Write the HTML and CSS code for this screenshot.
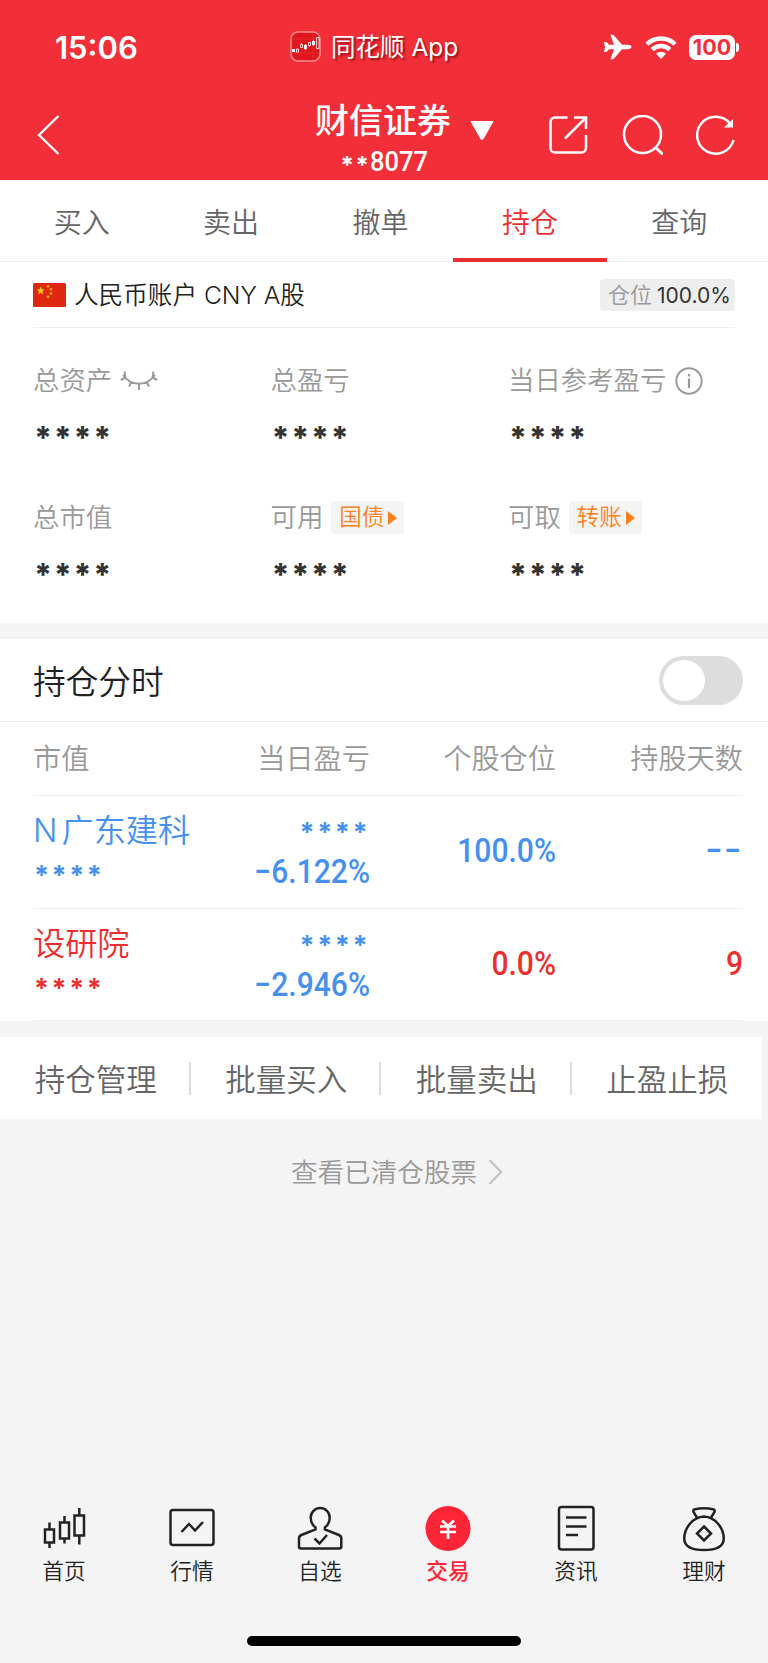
FILE: index.html
```html
<!DOCTYPE html>
<html lang="zh-CN">
<head>
  <meta charset="UTF-8">
  <meta name="viewport" content="width=device-width, initial-scale=1.0">
  <title>持仓</title>
  <link rel="stylesheet" href="styles.css">
</head>
<body>
  <header class="header">
    <div class="status-bar">
      <span class="time">15:06</span>
      <div class="app-name">
        <svg class="app-icon" width="32" height="32" viewBox="0 0 32 32">
          <rect x="1" y="1" width="29" height="29" rx="7" fill="#e0161f" stroke="#f98a8d" stroke-width="1.5"/>
          <path d="M2 8h27M2 22h27M23 2v27" stroke="#e93a40" stroke-width=".6"/>
          <path d="M2 18h3v3H2zM14 14h3v4h-3zM22 10h3v4h-3z" fill="#fff"/>
          <path d="M6.500 18h2v3h-2zM10.500 13.500h2v3h-2zM11.500 12v1M18.500 11.500h2v3h-2zM19.500 14v2M26.500 6.500h2.500v11h-2.500zM15.500 13v6M23.500 9v6" fill="none" stroke="#fff" stroke-width=".8"/>
        </svg>
        <span>同花顺 App</span>
      </div>
      <div class="status-icons">
        <svg class="plane" width="30" height="28" viewBox="0 0 30 28">
          <path d="M28.500 14c0 1.300-2 2.200-4 2.200h-5.500L11 25.500c-.5.600-1 .8-2 .8H7.500l3.500-10H6L3.500 19H1l1-5-1-5h2.500L6 11.800h5L7.500 1.700H9c1 0 1.500.2 2 .8l8 9.300h5.500c2 0 4 .9 4 2.200z" fill="#fff"/>
        </svg>
        <svg class="wifi" width="32" height="25" viewBox="0 0 32 25">
          <path d="M2 9.200a20 20 0 0 1 28 0M7.200 14.600a12.500 12.500 0 0 1 17.600 0" fill="none" stroke="#fff" stroke-width="4.400"/>
          <path d="M16 24l-5-5.200a7.300 7.300 0 0 1 10 0z" fill="#fff"/>
        </svg>
        <span class="battery">100</span>
        <span class="battery-tip"></span>
      </div>
    </div>
    <div class="title-bar">
      <svg class="back" width="24" height="42" viewBox="0 0 24 42">
        <path d="M22.500 2L3 21l19.500 19" fill="none" stroke="#fff" stroke-width="2.300"/>
      </svg>
      <div class="broker">
        <div class="broker-name">财信证券</div>
        <div class="broker-no"><i>*</i><i>*</i><span>8077</span></div>
      </div>
      <svg class="caret" width="26" height="21" viewBox="0 0 26 21">
        <path d="M2 1.500h22L14 19q-1 1.500-2 0z" fill="#fff" stroke="#fff" stroke-linejoin="round"/>
      </svg>
      <div class="actions">
        <svg width="40" height="40" viewBox="0 0 40 40">
          <path d="M19.500 2.500H7a4.500 4.500 0 0 0-4.500 4.500v26A4.500 4.500 0 0 0 7 37.500h26.500a4.500 4.500 0 0 0 4.500-4.500V20M26 2.500h12V14M37.500 3L17 23.500" fill="none" stroke="#fff" stroke-width="2.500"/>
        </svg>
        <svg width="42" height="40" viewBox="0 0 42 40">
          <circle cx="21.500" cy="19.500" r="18.500" fill="none" stroke="#fff" stroke-width="2.500"/>
          <path d="M34 32l8 7.500" stroke="#fff" stroke-width="3"/>
        </svg>
        <svg width="40" height="40" viewBox="0 0 40 40">
          <path d="M34 8.500A18.500 18.500 0 1 0 37.500 25" fill="none" stroke="#fff" stroke-width="2.500"/>
          <path d="M37 4v8.500H28z" fill="#fff"/>
        </svg>
      </div>
    </div>
  </header>

  <nav class="tabs">
    <span class="tab">买入</span>
    <span class="tab">卖出</span>
    <span class="tab">撤单</span>
    <span class="tab active">持仓</span>
    <span class="tab">查询</span>
  </nav>

  <section class="account">
    <div class="account-head">
      <svg class="flag" width="33" height="24" viewBox="0 0 33 24">
        <rect width="33" height="24" rx="1.500" fill="#de2910"/>
        <path d="M7.700 3.600l1 2.900h3l-2.400 1.800.9 2.900-2.500-1.800-2.500 1.800.9-2.900-2.400-1.800h3z" fill="#ffde00"/>
        <g fill="#f7a81b"><circle cx="15" cy="3.200" r="1.300"/><circle cx="18" cy="6.200" r="1.300"/><circle cx="18" cy="10.500" r="1.300"/><circle cx="15" cy="13.800" r="1.300"/></g>
      </svg>
      <span class="account-name">人民币账户 CNY A股</span>
      <span class="position-tag">仓位<b>100.0%</b></span>
    </div>
    <div class="summary">
      <div class="item">
        <div class="label">总资产
          <svg class="eye" width="38" height="20" viewBox="0 0 38 20">
            <path d="M3 4c8 11.500 24 11.500 32 0M4.500 .5l1 6L.8 9M33.500 .5l-1 6 4.700 2.500M11.500 11L9 15.500M19 13v6M26.500 11l2.500 4.500" fill="none" stroke="#999" stroke-width="2"/>
          </svg>
        </div>
        <div class="stars">****</div>
      </div>
      <div class="item">
        <div class="label">总盈亏</div>
        <div class="stars">****</div>
      </div>
      <div class="item">
        <div class="label">当日参考盈亏
          <svg class="info" width="28" height="28" viewBox="0 0 28 28">
            <circle cx="14" cy="14" r="12.700" fill="none" stroke="#999" stroke-width="1.900"/>
            <path d="M14 11.500V21M14 7v2.500" stroke="#999" stroke-width="2.200"/>
          </svg>
        </div>
        <div class="stars">****</div>
      </div>
      <div class="item">
        <div class="label">总市值</div>
        <div class="stars">****</div>
      </div>
      <div class="item">
        <div class="label">可用<span class="link">国债</span></div>
        <div class="stars">****</div>
      </div>
      <div class="item">
        <div class="label">可取<span class="link">转账</span></div>
        <div class="stars">****</div>
      </div>
    </div>
  </section>

  <section class="holdings">
    <div class="holdings-head">
      <span>持仓分时</span>
      <span class="toggle"></span>
    </div>
    <div class="row row-head">
      <span>市值</span>
      <span>当日盈亏</span>
      <span>个股仓位</span>
      <span>持股天数</span>
    </div>
    <div class="row blue">
      <div class="cell">
        <div class="name">N<span class="gap"></span>广东建科</div>
        <div class="stars">****</div>
      </div>
      <div class="cell blue">
        <div class="stars">****</div>
        <div class="num">−6.122%</div>
      </div>
      <div class="num">100.0%</div>
      <div class="num dash">−−</div>
    </div>
    <div class="row red">
      <div class="cell">
        <div class="name">设研院</div>
        <div class="stars">****</div>
      </div>
      <div class="cell blue">
        <div class="stars">****</div>
        <div class="num">−2.946%</div>
      </div>
      <div class="num">0.0%</div>
      <div class="num">9</div>
    </div>
  </section>

  <div class="batch">
    <span>持仓管理</span>
    <span>批量买入</span>
    <span>批量卖出</span>
    <span>止盈止损</span>
  </div>

  <div class="cleared">
    <span>查看已清仓股票</span>
    <svg width="15" height="26" viewBox="0 0 15 26">
      <path d="M1.500 1L13 13 1.500 25" fill="none" stroke="#c4c4c4" stroke-width="2.500"/>
    </svg>
  </div>

  <footer class="footer">
    <div class="nav">
      <div class="nav-item">
        <svg width="48" height="48" viewBox="0 0 48 48" class="line">
          <path d="M5 25.500h9v13H5zM9.500 18.500v7M9.500 38.500v5.500M20 18.500h9v16h-9zM24.500 12v6.500M24.500 34.500v5M34.500 11.500h9.500v20h-9.500zM39.300 4v7.500M39.300 31.500v9"/>
        </svg>
        <span>首页</span>
      </div>
      <div class="nav-item">
        <svg width="48" height="48" viewBox="0 0 48 48" class="line">
          <rect x="2.500" y="6" width="43" height="35" rx="2.500"/>
          <path d="M13.500 28l7.500-8 6 6.500 8-8.500"/>
        </svg>
        <span>行情</span>
      </div>
      <div class="nav-item">
        <svg width="48" height="48" viewBox="0 0 48 48" class="line">
          <path d="M19.500 25.500v-2C16 21 14.700 17.500 14.700 13.500a9.500 9.500 0 0 1 19 0c0 4-1.300 7.500-4.800 10v2l14 5.500q2.400 1 2.400 3.500v8q0 2-2 2H5q-2 0-2-2v-8q0-2.500 2.400-3.500z"/>
          <path d="M18.500 34.500l5 5 7.500-8.500"/>
        </svg>
        <span>自选</span>
      </div>
      <div class="nav-item active">
        <svg width="48" height="48" viewBox="0 0 48 48">
          <circle cx="24" cy="24.500" r="22.500" fill="#ff2436"/>
          <path d="M18 16.500l6 5.500 6-5.500M16 22.500h16M16 28h16M24 22v13" fill="none" stroke="#fff" stroke-width="2.700"/>
        </svg>
        <span>交易</span>
      </div>
      <div class="nav-item">
        <svg width="48" height="48" viewBox="0 0 48 48" class="line">
          <rect x="7" y="3" width="34.500" height="42.500" rx="2.500"/>
          <path d="M14 13.500h20.500M14 22.500h20.500M14 31h12"/>
        </svg>
        <span>资讯</span>
      </div>
      <div class="nav-item">
        <svg width="48" height="48" viewBox="0 0 48 48" class="line">
          <path d="M17.500 14.500L13.500 8q-.8-2.200 1.500-2.800 9-1.800 18 0 2.300.6 1.500 2.800l-4 6.500"/>
          <path d="M24 12.500C12.500 13 4 24.500 4.300 35 4.500 44 13 46 24 46s19.500-2 19.700-11C44 24.500 35.500 13 24 12.500z"/>
          <path d="M24 22.500l7 7-7 7-7-7z"/>
        </svg>
        <span>理财</span>
      </div>
    </div>
    <div class="home-bar"></div>
  </footer>
</body>
</html>
```
FILE: styles.css
```css
* {
  box-sizing: border-box;
}

body {
  margin: 0;
  height: 1663px;
  display: flex;
  flex-direction: column;
  background: #f4f4f4;
  color: #222;
  font-family: Inter, "Noto Sans CJK SC", sans-serif;
  font-weight: 350;
  line-height: 1;
}

svg {
  display: block;
  flex: none;
}

/* header */
.header {
  height: 180px;
  background: #f22f38;
  color: #fff;
}

.status-bar {
  height: 94px;
  display: grid;
  grid-template-columns: 290px 1fr 164px;
  align-items: center;
}

.time {
  padding-left: 55px;
  font-size: 31px;
  font-weight: 600;
}

.app-name {
  display: flex;
  align-items: center;
  gap: 9px;
  font-size: 24.500px;
  font-weight: 400;
  text-shadow: 2px 2px 2px rgba(90, 0, 0, 0.6);
}

.status-icons {
  display: flex;
  align-items: center;
}

.plane {
  margin-left: -1px;
}

.wifi {
  margin-left: 12px;
}

.battery {
  margin-left: 12px;
  width: 46px;
  height: 25px;
  border-radius: 7px;
  background: #fff;
  color: #f22f38;
  font-size: 21.500px;
  font-weight: 700;
  line-height: 25px;
  text-align: center;
}

.battery-tip {
  margin-left: 1px;
  width: 3px;
  height: 9px;
  border-radius: 0 4px 4px 0;
  background: #fff;
}

.title-bar {
  height: 86px;
  display: flex;
  align-items: flex-start;
}

.back {
  margin: 20px 0 0 36px;
}

.broker {
  margin-left: 254px;
  width: 138px;
  text-align: center;
}

.broker-name {
  margin-top: 10px;
  font-size: 34px;
  font-weight: 500;
  white-space: nowrap;
}

.broker-no {
  margin-top: 9px;
  font-size: 28px;
  line-height: 28px;
  white-space: nowrap;
}

.broker-no span {
  display: inline-block;
  margin-right: -7px;
  font-family: Roboto, sans-serif;
  font-weight: 500;
  transform: scaleX(0.91);
  transform-origin: left;
}

.broker-no i {
  display: inline-block;
  width: 15px;
  font-size: 24px;
  font-style: normal;
  font-weight: 700;
  line-height: 10px;
  vertical-align: -3px;
}

.caret {
  margin: 26px 0 0 17px;
}

.actions {
  margin: 21px 0 0 53px;
  display: flex;
  gap: 33px;
}

/* tabs */
.tabs {
  height: 82px;
  padding: 0 14px 0 7px;
  display: flex;
  background: #fff;
  border-bottom: 1px solid #eee;
}

.tab {
  flex: 1;
  position: relative;
  font-size: 28px;
  line-height: 87px;
  text-align: center;
  color: #666;
}

.tab.active {
  color: #e93030;
}

.tab.active::after {
  content: "";
  position: absolute;
  left: -2px;
  right: -2px;
  bottom: -1px;
  height: 4px;
  background: #e93030;
}

/* account summary */
.account {
  height: 361px;
  background: #fff;
}

.account-head {
  height: 66px;
  margin: 0 33px;
  display: flex;
  align-items: center;
  border-bottom: 1px solid #eee;
}

.account-name {
  margin-left: 8px;
  font-size: 24.600px;
  line-height: 26px;
  padding-top: 1px;
}

.position-tag {
  margin-left: auto;
  width: 135px;
  height: 32px;
  padding-left: 8px;
  border-radius: 4px;
  background: #eee;
  color: #999;
  font-size: 22px;
  line-height: 33px;
  white-space: nowrap;
}

.position-tag b {
  margin-left: 5px;
  color: #333;
  font-size: 21px;
  font-weight: 400;
}

.summary {
  padding: 35px 0 0 33px;
  display: grid;
  grid-template-columns: 237.500px 237.500px 1fr;
}

.item {
  height: 137px;
}

.label {
  height: 34px;
  padding-top: 1px;
  display: flex;
  align-items: center;
  font-size: 26.400px;
  color: #999;
}

.eye {
  margin-left: 8px;
}

.info {
  margin-left: 9px;
}

.link {
  margin-left: 8px;
  width: 73px;
  height: 33px;
  padding-left: 8px;
  display: flex;
  align-items: center;
  gap: 4px;
  border-radius: 4px;
  background: #f4f4f4;
  color: #ff801a;
  font-size: 22.500px;
}

.link::after {
  content: "";
  border: solid transparent;
  border-width: 7px 0 7px 9px;
  border-left-color: #ff801a;
}

.stars {
  font-family: Inter, sans-serif;
  font-weight: 800;
}

.item .stars {
  height: 38px;
  margin: 22px 0 0 1px;
  font-size: 31px;
  letter-spacing: 1.700px;
  line-height: 38px;
  color: #333;
}

/* holdings */
.holdings {
  height: 382px;
  margin-top: 16px;
  background: #fff;
}

.holdings-head {
  height: 83px;
  padding: 0 25px 0 33px;
  display: flex;
  align-items: center;
  justify-content: space-between;
  border-bottom: 1px solid #eee;
  font-size: 32.700px;
  line-height: 36px;
}

.holdings-head > :first-child {
  padding-top: 3px;
}

.toggle {
  width: 84px;
  height: 49px;
  padding: 4px;
  border-radius: 25px;
  background: #ddd;
}

.toggle::after {
  content: "";
  display: block;
  width: 42px;
  height: 41px;
  border-radius: 50%;
  background: #fff;
}

.row {
  height: 112.500px;
  margin: 0 25px 0 33px;
  display: grid;
  grid-template-columns: 190px 147px 186px 1fr;
  align-items: center;
  border-bottom: 1px solid #eee;
  text-align: right;
}

.row > :first-child {
  text-align: left;
}

.row-head {
  height: 74px;
  padding-top: 2px;
  font-size: 28.200px;
  color: #999;
}

.blue {
  color: #4691ee;
}

.red {
  color: #e93030;
}

.cell {
  height: 112px;
  padding-top: 14px;
}

.name {
  height: 41px;
  font-size: 32.200px;
  line-height: 41px;
}

.gap {
  padding-left: 4px;
}

.row .stars {
  height: 41px;
  padding-top: 2px;
  font-size: 27px;
  font-weight: 700;
  letter-spacing: 2.500px;
  line-height: 41px;
}

.row .name + .stars {
  padding: 4px 0 0 1px;
}

.num {
  font-family: Roboto, sans-serif;
  font-size: 33px;
  font-weight: 500;
  line-height: 41px;
  transform: scaleX(0.91);
  transform-origin: right;
}

.row > .num {
  padding-bottom: 3px;
}

.dash {
  letter-spacing: 2px;
}

/* batch actions */
.batch {
  width: 762px;
  height: 82px;
  margin-top: 16px;
  display: grid;
  grid-template-columns: repeat(4, 1fr);
  align-items: center;
  background: #fff;
  color: #666;
  font-size: 30.500px;
  text-align: center;
}

.batch span {
  height: 33px;
  padding-left: 1px;
  line-height: 36px;
}

.batch span + span {
  margin-left: -2px;
  border-left: 2px solid #ddd;
}

.cleared {
  margin-top: 40px;
  padding-left: 26px;
  display: flex;
  align-items: center;
  justify-content: center;
  gap: 11px;
  color: #999;
  font-size: 26.600px;
}

/* bottom navigation */
.footer {
  height: 160px;
  margin-top: auto;
}

.nav {
  padding-top: 1px;
  display: grid;
  grid-template-columns: repeat(6, 1fr);
}

.nav-item {
  display: flex;
  flex-direction: column;
  align-items: center;
  gap: 8px;
  font-size: 21.700px;
  line-height: 22px;
}

.line {
  fill: none;
  stroke: #222;
  stroke-width: 2.500;
}

.nav-item.active {
  color: #ff2436;
  font-weight: 500;
}

.home-bar {
  width: 274px;
  height: 10px;
  margin: 54px auto 0;
  border-radius: 5px;
  background: #000;
}
```
